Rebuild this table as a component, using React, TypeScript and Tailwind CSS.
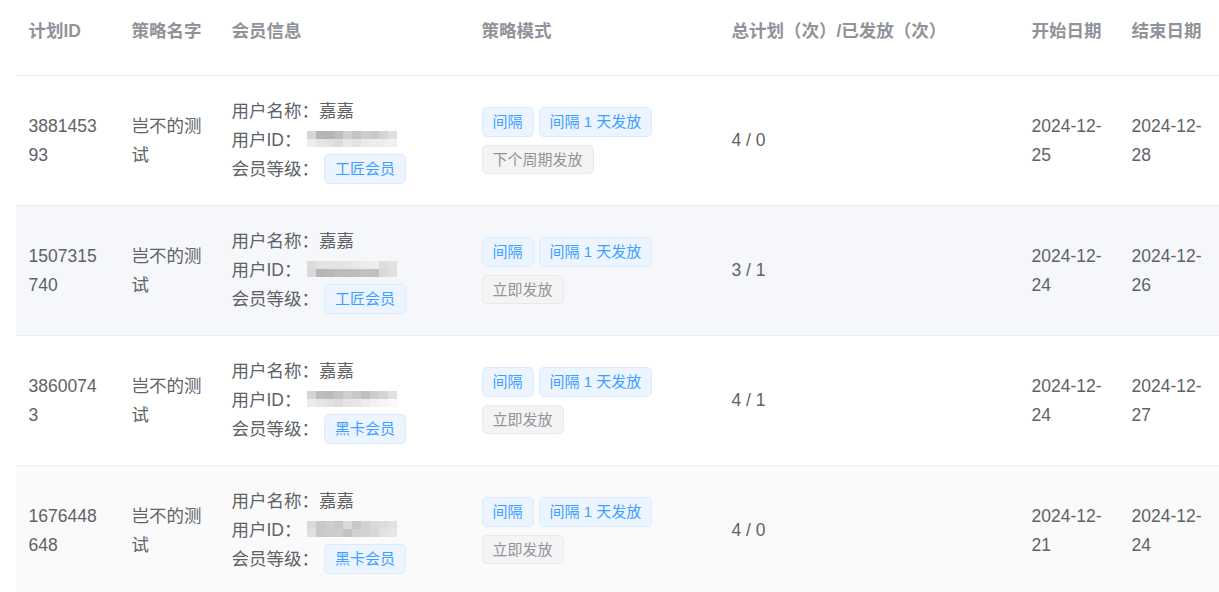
import React from "react";

type Row = {
  id: string;
  name: string;
  user: string;
  level: string;
  modes: string[];
  next: string;
  count: string;
  start: string;
  end: string;
  bg: string;
  mosaic: string[][];
};

const rows: Row[] = [
  {
    id: "388145393",
    name: "岂不的测试",
    user: "嘉嘉",
    level: "工匠会员",
    modes: ["间隔", "间隔 1 天发放"],
    next: "下个周期发放",
    count: "4 / 0",
    start: "2024-12-25",
    end: "2024-12-28",
    bg: "bg-white",
    mosaic: [
      ["#d6d6d6", "#b5b5b5", "#b5b5b5", "#bdbdbd", "#cfcfcf", "#c4c4c4", "#cdcdcd", "#c9c9c9", "#d5d5d5", "#e0e0e0"],
      ["#eeeeee", "#e6e6e6", "#e2e2e2", "#dcdcdc", "#e8e8e8", "#e4e4e4", "#ebebeb", "#eeeeee", "#eeeeee", "#f0f0f0"],
    ],
  },
  {
    id: "1507315740",
    name: "岂不的测试",
    user: "嘉嘉",
    level: "工匠会员",
    modes: ["间隔", "间隔 1 天发放"],
    next: "立即发放",
    count: "3 / 1",
    start: "2024-12-24",
    end: "2024-12-26",
    bg: "bg-[#f5f7fa]",
    mosaic: [
      ["#dcdcdc", "#e3e3e3", "#e3e3e3", "#e3e3e3", "#e6e6e6", "#e8e8e8", "#ebebeb", "#eeeeee", "#dedede", "#e2e2e2"],
      ["#d9d9d9", "#b5b5b5", "#b8b8b8", "#bdbdbd", "#bcbcbc", "#bdbdbd", "#c2c2c2", "#c0c0c0", "#d9d9d9", "#e0e0e0"],
    ],
  },
  {
    id: "38600743",
    name: "岂不的测试",
    user: "嘉嘉",
    level: "黑卡会员",
    modes: ["间隔", "间隔 1 天发放"],
    next: "立即发放",
    count: "4 / 1",
    start: "2024-12-24",
    end: "2024-12-27",
    bg: "bg-white",
    mosaic: [
      ["#d4d4d4", "#bdbdbd", "#bbbbbb", "#c4c4c4", "#cfcfcf", "#c8c8c8", "#bfbfbf", "#cdcdcd", "#d4d4d4", "#e0e0e0"],
      ["#ececec", "#e6e6e6", "#e2e2e2", "#dcdcdc", "#e4e4e4", "#e8e8e8", "#ededed", "#f2f2f2", "#f6f6f6", "#fafafa"],
    ],
  },
  {
    id: "1676448648",
    name: "岂不的测试",
    user: "嘉嘉",
    level: "黑卡会员",
    modes: ["间隔", "间隔 1 天发放"],
    next: "立即发放",
    count: "4 / 0",
    start: "2024-12-21",
    end: "2024-12-24",
    bg: "bg-[#fafafa]",
    mosaic: [
      ["#d9d9d9", "#c8c8c8", "#cdcdcd", "#c9c9c9", "#dadada", "#c8c8c8", "#d2d2d2", "#dadada", "#dcdcdc", "#e2e2e2"],
      ["#e0e0e0", "#c8c8c8", "#cbcbcb", "#cccccc", "#c4c4c4", "#d1d1d1", "#d3d3d3", "#d6d6d6", "#e2e2e2", "#e6e6e6"],
    ],
  },
];

const Mosaic = ({ cells }: { cells: string[][] }) => (
  <svg width="90" height="16" viewBox="0 0 90 16" className="inline-block align-middle -mt-[2px]">
    {cells.map((line, r) =>
      line.map((c, i) => <rect key={`${r}-${i}`} x={i * 9} y={r * 8} width="9" height="8" fill={c} />)
    )}
  </svg>
);

const BlueTag = ({ children }: { children: React.ReactNode }) => (
  <span className="inline-block h-[30px] px-[10px] leading-[28px] text-[15px] text-[#409eff] bg-[#ecf5ff] border border-[#d9ecff] rounded-[5px] whitespace-nowrap align-middle">
    {children}
  </span>
);

const GrayTag = ({ children }: { children: React.ReactNode }) => (
  <span className="inline-block h-[29px] px-[10px] leading-[27px] text-[15px] text-[#909399] bg-[#f4f4f5] border border-[#e9e9eb] rounded-[5px] whitespace-nowrap">
    {children}
  </span>
);

const th = "h-[76px] px-[12.5px] pt-[16.5px] align-top text-left font-bold text-[#909399] border-b border-[#ebeef5]";
const td = "px-[12.5px] py-[12.5px] align-middle border-b border-[#ebeef5] break-all";

export default function App() {
  return (
    <div className="min-h-[592px] bg-white pl-4 overflow-hidden font-['Liberation_Sans','Noto_Sans_CJK_SC',sans-serif] text-[17.5px] leading-[28.75px] text-[#606266]">
      <table className="w-[1203px] table-fixed border-separate border-spacing-0">
        <colgroup>
          <col className="w-[103px]" />
          <col className="w-[100px]" />
          <col className="w-[250px]" />
          <col className="w-[250px]" />
          <col className="w-[300px]" />
          <col className="w-[100px]" />
          <col className="w-[100px]" />
        </colgroup>
        <thead>
          <tr>
            <th className={th}>计划ID</th>
            <th className={th}>策略名字</th>
            <th className={th}>会员信息</th>
            <th className={th}>策略模式</th>
            <th className={th}>总计划（次）/已发放（次）</th>
            <th className={th}>开始日期</th>
            <th className={th}>结束日期</th>
          </tr>
        </thead>
        <tbody>
          {rows.map((r) => (
            <tr key={r.id} className={`h-[130px] ${r.bg}`}>
              <td className={`${td} pr-[14px]`}>{r.id}</td>
              <td className={td}>{r.name}</td>
              <td className={td}>
                <div>用户名称：{r.user}</div>
                <div className="flex items-center gap-[5px]">
                  <span>用户ID：</span>
                  <Mosaic cells={r.mosaic} />
                </div>
                <div className="flex items-center gap-[5px] h-[30px]">
                  <span>会员等级：</span>
                  <BlueTag>{r.level}</BlueTag>
                </div>
              </td>
              <td className={td}>
                <div className="flex flex-col items-start gap-[8px]">
                  <div className="flex gap-[5px]">
                    {r.modes.map((m) => (
                      <BlueTag key={m}>{m}</BlueTag>
                    ))}
                  </div>
                  <GrayTag>{r.next}</GrayTag>
                </div>
              </td>
              <td className={td}>{r.count}</td>
              <td className={td}>{r.start}</td>
              <td className={td}>{r.end}</td>
            </tr>
          ))}
        </tbody>
      </table>
    </div>
  );
}
